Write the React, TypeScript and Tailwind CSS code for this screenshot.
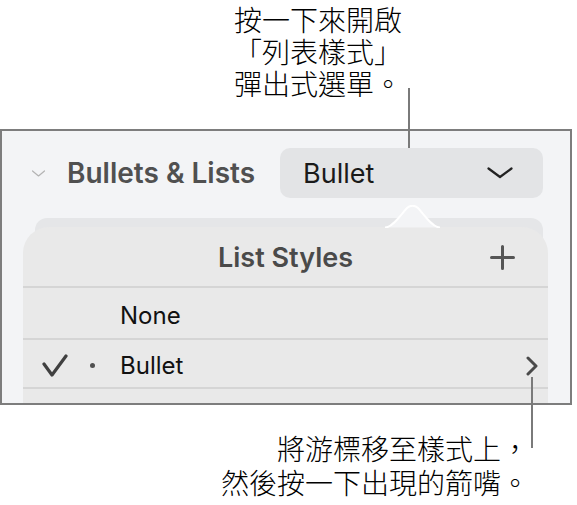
const cjk = 'font-["Noto_Sans_CJK_TC",sans-serif] font-light';

function ChevronDown({ className, stroke, width, d }: { className: string; stroke: string; width: number; d: string }) {
  return (
    <svg className={className} viewBox="0 0 26 12" fill="none">
      <path d={d} stroke={stroke} strokeWidth={width} strokeLinecap="round" strokeLinejoin="round" />
    </svg>
  );
}

function Divider() {
  return <div className="h-[2px] bg-[#d5d5d5]" />;
}

export default function App() {
  return (
    <div className="relative w-[577px] h-[505px] bg-white overflow-hidden font-['Inter',sans-serif]">
      {/* top callout */}
      <div className="h-[129px] pt-[3px]">
        <div className={`ml-[218px] w-[200px] text-center text-[28px] leading-[32px] text-black ${cjk}`}>
          <div>按一下來開啟</div>
          <div>「列表樣式」</div>
          <div>彈出式選單。</div>
        </div>
      </div>

      {/* screenshot frame */}
      <div className="relative w-[572px] h-[276px] border-2 border-[#7d7d7d] bg-[#f3f4f6] overflow-hidden">
        <div className="flex items-center pt-[17px] pl-[30px] pr-[27px]">
          <ChevronDown className="w-[13px] h-[7px]" stroke="#b3b3b3" width={2.4} d="M1 1 L13 11 L25 1" />
          <span className="ml-[22px] text-[28px] font-semibold text-[#505050]">Bullets &amp; Lists</span>
          <div className="ml-auto w-[263px] h-[50px] rounded-[10px] bg-[#e3e4e6] flex items-center pl-[23px] pr-[30px]">
            <span className="text-[27px] text-[#1a1a1a] pt-[3px]">Bullet</span>
            <ChevronDown className="ml-auto w-[26px] h-[12px]" stroke="#222222" width={2.2} d="M1.5 1.5 L13 10 L24.5 1.5" />
          </div>
        </div>

        {/* back panel + popover */}
        <div className="mt-[20px] ml-[33px] w-[508px] h-[200px] rounded-t-[12px] bg-[#e5e6e8]">
          <div className="pt-[9px]">
            <div className="-ml-[12px] w-[525px] rounded-t-[26px] bg-[#e9e9e9]">
              <div className="h-[59px] pt-[4px] grid grid-cols-[1fr_auto_1fr] items-center">
                <div />
                <span className="text-[27px] font-semibold text-[#4a4a4a]">List Styles</span>
                <div className="flex justify-end pr-[33px] pb-[3px]">
                  <svg className="w-[25px] h-[25px]" viewBox="0 0 25 25" fill="none">
                    <path d="M12.5 1.5 V23.5 M1.5 12.5 H23.5" stroke="#555555" strokeWidth="3" strokeLinecap="round" />
                  </svg>
                </div>
              </div>
              <Divider />
              <div className="h-[50px] flex items-center pl-[97px] pt-[6px] text-[24px] text-[#111111]">None</div>
              <Divider />
              <div className="h-[47px] flex items-center pt-[4px] text-[24px] text-[#111111]">
                <svg className="ml-[19px] w-[26px] h-[24px]" viewBox="0 0 26 24" fill="none">
                  <path d="M2 10 L10 21 L24 2" stroke="#404040" strokeWidth="3.2" strokeLinecap="round" strokeLinejoin="round" />
                </svg>
                <span className="ml-[22px] w-[5px] h-[5px] rounded-full bg-[#505050]" />
                <span className="ml-[25px]">Bullet</span>
                <svg className="ml-auto mr-[10px] w-[12px] h-[20px]" viewBox="0 0 12 20" fill="none">
                  <path d="M2 2 L10 10 L2 18" stroke="#4a4a4a" strokeWidth="3" strokeLinecap="round" strokeLinejoin="round" />
                </svg>
              </div>
              <Divider />
              <div className="h-[40px]" />
            </div>
          </div>
        </div>

        {/* popover caret */}
        <svg className="absolute left-[383px] top-[74px] w-[55px] h-[23px]" viewBox="0 0 55 23" fill="none">
          <path d="M0 22.5 C8 22.5 17 8 22 3 Q27.5 -1.5 33 3 C38 8 47 22.5 55 22.5" fill="#f3f4f6" stroke="#ffffff" strokeWidth="2" />
        </svg>
      </div>

      {/* bottom callout */}
      <div className={`mt-[26px] pr-[48px] text-right text-[28px] leading-[34px] text-black ${cjk}`}>
        <div>將游標移至樣式上，</div>
        <div>然後按一下出現的箭嘴。</div>
      </div>

      {/* leader lines */}
      <div className="absolute left-[408px] top-[88px] w-[2px] h-[60px] bg-[#7a7a7a]" />
      <div className="absolute left-[531px] top-[377px] w-[2px] h-[71px] bg-[#7a7a7a]" />
    </div>
  );
}
